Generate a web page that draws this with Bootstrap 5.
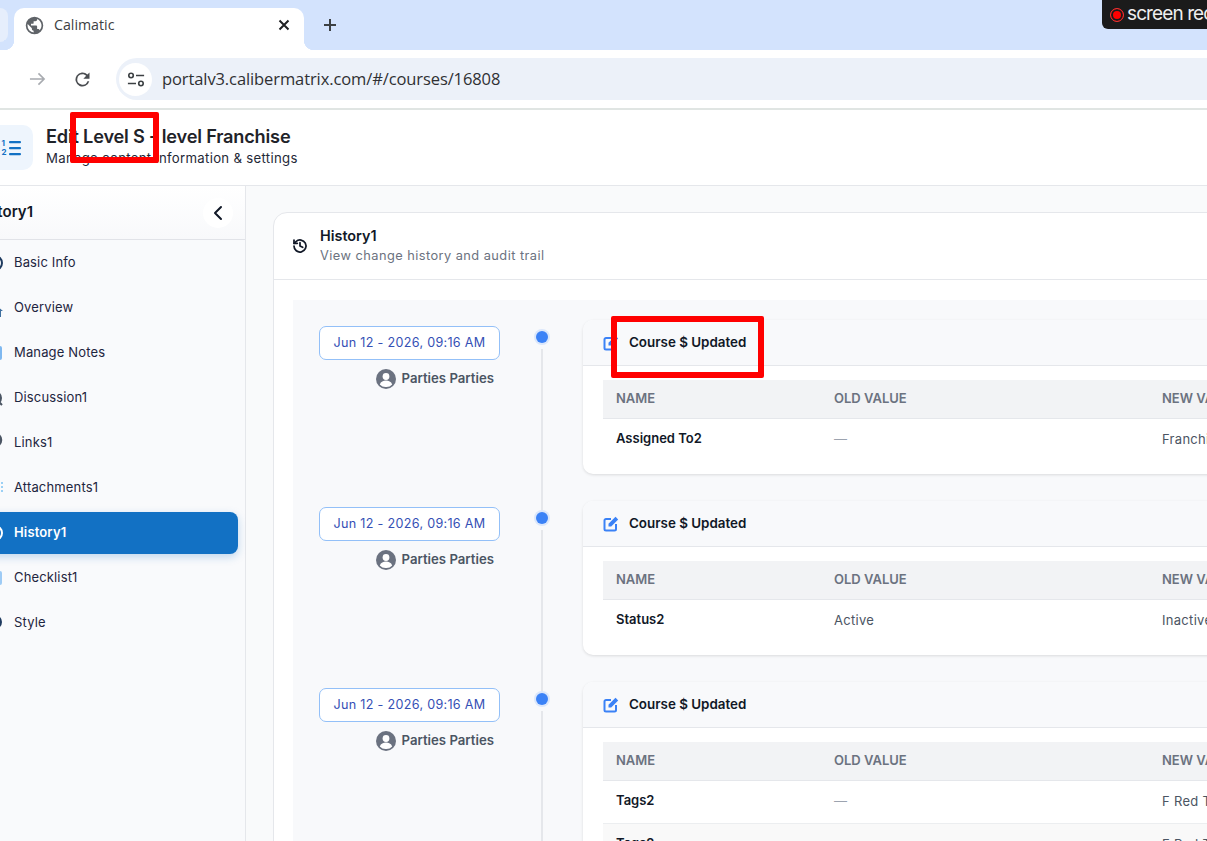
<!DOCTYPE html>
<html lang="en">
<head>
  <meta charset="UTF-8" />
  <meta name="viewport" content="width=device-width, initial-scale=1.0" />
  <title>Calimatic</title>
  <link href="https://cdn.jsdelivr.net/npm/bootstrap@5.3.0/dist/css/bootstrap.min.css" rel="stylesheet" crossorigin="anonymous" />
  <style>
    html, body { height: 841px; overflow: hidden; }
    body { font-family: "Inter", "Liberation Sans", sans-serif; color: #111827; background: #fff; position: relative; }

    /* browser chrome */
    .tab-strip { height: 50px; background: #d3e3fd; padding-top: 8px; font-family: "Open Sans", "Liberation Sans", sans-serif; }
    .tab-stub { width: 8px; height: 34px; background: #e6eefc; border-radius: 0 10px 10px 0; }
    .tab-live { position: relative; width: 290px; height: 42px; margin-left: 6px; background: #fff; border-radius: 10px 10px 0 0; padding: 0 14px 8px 10px; font-size: 14.2px; color: #3c4043; }
    .tab-live span { margin-left: 9px; }
    .tab-live::after { content: ""; position: absolute; right: -10px; bottom: 0; width: 10px; height: 10px; background: radial-gradient(circle at 100% 0, #d3e3fd 10px, #fff 10.5px); }
    .tab-live::before { content: ""; position: absolute; left: -10px; bottom: 0; width: 10px; height: 10px; background: radial-gradient(circle at 0 0, #d3e3fd 10px, #fff 10.5px); }
    .tab-add { margin-left: 19px; margin-top: -8px; height: 50px; }
    .rec-badge { position: absolute; top: 0; left: 1102px; width: 120px; height: 29px; background: #1b1b1b; border-radius: 0 0 0 6px; color: #eee; font-size: 19px; padding-left: 8px; letter-spacing: -.9px; white-space: nowrap; }
    .rec-dot { width: 14px; height: 14px; border-radius: 50%; background: #f00; box-shadow: inset 0 0 0 2px #1b1b1b; border: 1px solid #e33; margin-right: 3px; flex: none; }
    .tool-bar { height: 60px; padding: 8px 0; border-bottom: 2px solid #e0e5e3; }
    .tool-btn { width: 24px; height: 24px; }
    .url-pill { margin-left: 22px; flex: 1; height: 42px; background: #ecf1f9; border-radius: 21px 0 0 21px; padding: 1px 0 0 3px; font-family: "Open Sans", "Liberation Sans", sans-serif; font-size: 16.5px; color: #2f3033; letter-spacing: -.1px; }
    .url-icon { width: 33px; height: 33px; background: #fff; border-radius: 50%; margin-right: 10px; }

    /* page header */
    .page-head { height: 76px; border-bottom: 1px solid #e5e7eb; margin-left: -12px; padding-bottom: 2px; }
    .head-tile { width: 45px; height: 45px; background: #eef5fd; border-radius: 10px; margin-right: 13px; padding-right: 12px; position: relative; top: 1px; }
    .head-title { font-size: 18.2px; font-weight: 600; line-height: 20px; margin-bottom: 2px; letter-spacing: -.2px; color: #1f2329; }
    .head-sub { font-size: 13.2px; line-height: 20px; letter-spacing: .3px; color: #1f2937; }

    /* sidebar, starts left of the window like the capture */
    .body-row { height: 655px; margin-left: -55px; width: 1400px; }
    .side-col { width: 301px; flex: none; background: #f9fafc; border-right: 1px solid #e5e7eb; }
    .side-head { height: 54px; padding: 0 12px 0 29px; border-bottom: 1px solid #e1e3e8; background: linear-gradient(#fff, #f8f9fb); font-size: 15px; font-weight: 600; }
    .side-back { width: 30px; height: 30px; background: #fff; border-radius: 50%; }
    .side-list { padding-top: 2px; }
    .side-link { height: 42px; margin: 0 7px 3px 8px; padding-left: 33px; border-radius: 8px; font-size: 13px; color: #1e2540; letter-spacing: .15px; }
    .side-link svg { width: 18px; height: 18px; margin-right: 10px; flex: none; }
    .side-link.is-on { background: #1271c4; color: #fff; font-weight: 600; box-shadow: 0 3px 8px rgba(18, 113, 196, .25); }

    /* main */
    .main-col { flex: 1; background: #f9fafb; padding: 26px 0 0 27px; min-width: 0; }
    .hist-card { width: 1060px; height: 800px; background: #fff; border: 1px solid #e5e7eb; border-radius: 14px; }
    .hist-head { height: 67px; padding-left: 18px; border-bottom: 1px solid #e5e7eb; }
    .hist-title { font-size: 14.4px; font-weight: 600; line-height: 20px; }
    .hist-sub { font-size: 12.8px; line-height: 20px; color: #6b7280; letter-spacing: .45px; }
    .hist-body { padding: 20px 19px; }
    .time-panel { background: #f8f9fb; padding: 20px 0 0 26px; height: 700px; }
    .time-row { height: 181px; }
    .when-col { width: 181px; flex: none; }
    .when-pill { height: 34px; background: #fff; border: 1px solid #93c0f8; border-radius: 7px; color: #3550b5; font-size: 12.6px; letter-spacing: .3px; margin-top: 6px; }
    .when-user { margin-top: 9px; padding-right: 6px; font-size: 13.2px; font-weight: 600; color: #4b5563; }
    .when-user svg { margin-right: 6px; }
    .rail-col { width: 83px; flex: none; }
    .rail-dot { width: 12px; height: 12px; background: #3b82f6; border-radius: 50%; box-shadow: 0 0 0 2px #dbe7fb; margin-top: 11px; flex: none; }
    .rail-line { width: 2px; flex: 1; background: #e5e7eb; margin-top: 6px; margin-bottom: -11px; }
    .log-card { width: 760px; height: 154px; background: #fff; border-radius: 10px; box-shadow: 0 1px 3px rgba(0, 0, 0, .12); overflow: hidden; align-self: flex-start; }
    .log-card.is-tall { height: 200px; }
    .log-head { height: 46px; background: #f8f9fb; border-bottom: 1px solid #e5e7eb; padding-left: 20px; font-size: 13.4px; font-weight: 600; color: #111827; }
    .log-head svg { margin-right: 10px; }
    .log-body { padding: 14px 20px 0; }
    .log-table { table-layout: fixed; width: 740px; margin: 0; font-size: 13px; }
    .log-table th { background: #f2f3f5; color: #6b7280; font-weight: 600; font-size: 13px; height: 38.5px; padding: 0 13px 1px; vertical-align: middle; border-bottom: 1px solid #e5e7eb; text-transform: uppercase; }
    .log-table td { height: 43px; padding: 0 13px 1px; vertical-align: middle; border-bottom: 0; color: #4b5563; background: transparent; letter-spacing: .3px; }
    .log-table td.fld { color: #111827; font-weight: 600; padding-bottom: 3px; letter-spacing: 0; }
    .log-table td.nil { color: #9ca3af; }
    .log-table tr.has-line td { border-bottom: 1px solid #eceef0; }
    .log-table tr.row-alt td { background: #f9f9f9; }
    .col-a { width: 218px; }
    .col-b { width: 328px; }

    /* annotation boxes drawn on top of the screenshot */
    .mark-box { position: absolute; border: 6px solid #f00; border-radius: 2px; pointer-events: none; }
    .mark-one { left: 70px; top: 112px; width: 89px; height: 51px; }
    .mark-two { left: 611px; top: 316px; width: 153px; height: 62px; }
  </style>
</head>
<body>
  <div class="tab-strip d-flex align-items-start">
    <div class="tab-stub"></div>
    <div class="tab-live d-flex align-items-center">
      <svg width="21" height="21" viewBox="0 0 24 24" fill="#5f6368"><path d="M12 2a10 10 0 1 0 0 20 10 10 0 0 0 0-20zM4 12c0-.6.1-1.200.2-1.800L9 15v1c0 1.100.9 2 2 2v2a8 8 0 0 1-7-8zm13.900 5.400c-.3-.8-1-1.400-1.900-1.400h-1v-3c0-.6-.4-1-1-1H8v-2h2c.6 0 1-.4 1-1V7h2c1.100 0 2-.9 2-2v-.4a8 8 0 0 1 2.900 12.800z"/></svg>
      <span class="flex-grow-1">Calimatic</span>
      <svg width="12" height="12" viewBox="0 0 12 12" stroke="#202124" stroke-width="2" fill="none"><path d="M1.500 1.500l9 9M10.500 1.500l-9 9"/></svg>
    </div>
    <div class="tab-add d-flex align-items-center">
      <svg width="14" height="14" viewBox="0 0 14 14" stroke="#3c4043" stroke-width="2" fill="none"><path d="M7 1v12M1 7h12"/></svg>
    </div>
  </div>
  <div class="rec-badge d-flex align-items-center"><i class="rec-dot"></i>screen rec</div>

  <div class="tool-bar d-flex align-items-center">
    <div class="tool-btn d-flex align-items-center justify-content-center" style="margin-left:25px">
      <svg width="17" height="16" viewBox="0 0 18 16" stroke="#a8abb0" stroke-width="1.700" fill="none"><path d="M1 8h15M10 2l6 6-6 6"/></svg>
    </div>
    <div class="tool-btn d-flex align-items-center justify-content-center" style="margin-left:21px">
      <svg width="21" height="21" viewBox="0 0 24 24" fill="#4a4d51"><path d="M17.650 6.350A8 8 0 1 0 19.750 14h-2.100A6 6 0 1 1 12 6c1.660 0 3.140.69 4.220 1.780L13 11h7V4l-2.350 2.350z"/></svg>
    </div>
    <div class="url-pill d-flex align-items-center">
      <div class="url-icon d-flex align-items-center justify-content-center">
        <svg width="18" height="17" viewBox="0 0 20 18" stroke="#3c4043" stroke-width="1.800" fill="none"><circle cx="4.500" cy="4.500" r="2.500"/><path d="M10 4.500h9M1 13.500h9"/><circle cx="15.500" cy="13.500" r="2.500"/></svg>
      </div>
      portalv3.calibermatrix.com/#/courses/16808
    </div>
  </div>

  <div class="page-head d-flex align-items-center">
    <div class="head-tile d-flex align-items-center justify-content-end">
      <svg width="20" height="18" viewBox="0 0 20 18" fill="#1271c4"><rect x="8" y="2" width="12" height="2.200" rx="1"/><rect x="8" y="8" width="12" height="2.200" rx="1"/><rect x="8" y="14" width="12" height="2.200" rx="1"/><text x="0.500" y="7" font-size="8" font-weight="700" font-family="Inter, sans-serif">1</text><text x="0.500" y="16" font-size="8" font-weight="700" font-family="Inter, sans-serif">2</text></svg>
    </div>
    <div>
      <div class="head-title">Edit Level S - level Franchise</div>
      <div class="head-sub">Manage content information &amp; settings</div>
    </div>
  </div>

  <div class="body-row d-flex">
    <aside class="side-col">
      <div class="side-head d-flex align-items-center justify-content-between">
        <span>History1</span>
        <span class="side-back d-flex align-items-center justify-content-center">
          <svg width="10" height="16" viewBox="0 0 10 16" stroke="#111827" stroke-width="2" fill="none" stroke-linecap="round" stroke-linejoin="round"><path d="M8 2L2 8l6 6"/></svg>
        </span>
      </div>
      <div class="side-list">
        <div class="side-link d-flex align-items-center"><svg viewBox="0 0 18 18" fill="none" stroke="#1e3a5f" stroke-width="2"><circle cx="9" cy="9" r="7"/></svg>Basic Info</div>
        <div class="side-link d-flex align-items-center"><svg viewBox="0 0 18 18" fill="#3f6f9f"><path d="M9 5l8 7h-2v6H3v-6H1z"/></svg>Overview</div>
        <div class="side-link d-flex align-items-center"><svg viewBox="0 0 18 18" fill="#7fb8f0"><rect x="3" y="2" width="13" height="14" rx="2"/></svg>Manage Notes</div>
        <div class="side-link d-flex align-items-center"><svg viewBox="0 0 18 18" fill="none" stroke="#4b5563" stroke-width="2"><circle cx="9" cy="9" r="6"/><path d="M13 13l3 3"/></svg>Discussion1</div>
        <div class="side-link d-flex align-items-center"><svg viewBox="0 0 18 18" fill="none" stroke="#4b5563" stroke-width="2.500"><circle cx="9" cy="6" r="6"/></svg>Links1</div>
        <div class="side-link d-flex align-items-center"><svg viewBox="0 0 18 18" fill="none" stroke="#9bd0f5" stroke-width="2" stroke-dasharray="2 2"><path d="M16 3v12"/></svg>Attachments1</div>
        <div class="side-link is-on d-flex align-items-center"><svg viewBox="0 0 18 18" fill="none" stroke="#fff" stroke-width="2"><circle cx="9" cy="9" r="7"/></svg>History1</div>
        <div class="side-link d-flex align-items-center"><svg viewBox="0 0 18 18" fill="#9ecbf5"><rect x="3" y="2" width="13" height="14" rx="2"/></svg>Checklist1</div>
        <div class="side-link d-flex align-items-center"><svg viewBox="0 0 18 18" fill="#1e3a5f"><circle cx="9" cy="8" r="7"/></svg>Style</div>
      </div>
    </aside>

    <main class="main-col">
      <div class="hist-card">
        <div class="hist-head d-flex align-items-center">
          <svg width="16" height="16" viewBox="0 0 24 24" fill="none" stroke="#111827" stroke-width="2.600" stroke-linecap="round" stroke-linejoin="round" class="me-2 flex-shrink-0"><path d="M3 12a9 9 0 1 0 3-6.700L3 8"/><path d="M3 3v5h5"/><path d="M12 7v5l4 2"/></svg>
          <div class="ms-1">
            <div class="hist-title">History1</div>
            <div class="hist-sub">View change history and audit trail</div>
          </div>
        </div>
        <div class="hist-body">
          <div class="time-panel">

            <div class="time-row d-flex">
              <div class="when-col">
                <div class="when-pill d-flex align-items-center justify-content-center">Jun 12 - 2026, 09:16 AM</div>
                <div class="when-user d-flex align-items-center justify-content-end">
                  <svg width="20" height="20" viewBox="0 0 20 20"><circle cx="10" cy="10" r="10" fill="#6b7280"/><circle cx="10" cy="7.500" r="3.400" fill="#fff"/><path d="M3.800 15.500c1-3 3.500-4 6.200-4s5.200 1 6.200 4A8 8 0 0 1 10 18a8 8 0 0 1-6.200-2.500z" fill="#fff"/></svg>
                  Parties Parties
                </div>
              </div>
              <div class="rail-col d-flex flex-column align-items-center">
                <div class="rail-dot"></div>
                <div class="rail-line"></div>
              </div>
              <div class="log-card">
                <div class="log-head d-flex align-items-center">
                  <svg width="16" height="16" viewBox="0 0 16 16" fill="none" stroke="#3b82f6" stroke-width="2"><path d="M8 3H3A1.500 1.500 0 0 0 1.500 4.500v8.500A1.500 1.500 0 0 0 3 14.500h8.500a1.500 1.500 0 0 0 1.500-1.500V8"/><path d="M5.500 10.500V7.800L12.500.8l2.700 2.700-7 7z" fill="#3b82f6" stroke="none"/></svg>
                  Course $ Updated
                </div>
                <div class="log-body">
                  <table class="table log-table">
                    <thead><tr><th class="col-a">Name</th><th class="col-b">Old Value</th><th>New Value</th></tr></thead>
                    <tbody><tr><td class="fld">Assigned To2</td><td class="nil">—</td><td>Franchise</td></tr></tbody>
                  </table>
                </div>
              </div>
            </div>

            <div class="time-row d-flex">
              <div class="when-col">
                <div class="when-pill d-flex align-items-center justify-content-center">Jun 12 - 2026, 09:16 AM</div>
                <div class="when-user d-flex align-items-center justify-content-end">
                  <svg width="20" height="20" viewBox="0 0 20 20"><circle cx="10" cy="10" r="10" fill="#6b7280"/><circle cx="10" cy="7.500" r="3.400" fill="#fff"/><path d="M3.800 15.500c1-3 3.500-4 6.200-4s5.200 1 6.200 4A8 8 0 0 1 10 18a8 8 0 0 1-6.200-2.500z" fill="#fff"/></svg>
                  Parties Parties
                </div>
              </div>
              <div class="rail-col d-flex flex-column align-items-center">
                <div class="rail-dot"></div>
                <div class="rail-line"></div>
              </div>
              <div class="log-card">
                <div class="log-head d-flex align-items-center">
                  <svg width="16" height="16" viewBox="0 0 16 16" fill="none" stroke="#3b82f6" stroke-width="2"><path d="M8 3H3A1.500 1.500 0 0 0 1.500 4.500v8.500A1.500 1.500 0 0 0 3 14.500h8.500a1.500 1.500 0 0 0 1.500-1.500V8"/><path d="M5.500 10.500V7.800L12.500.8l2.700 2.700-7 7z" fill="#3b82f6" stroke="none"/></svg>
                  Course $ Updated
                </div>
                <div class="log-body">
                  <table class="table log-table">
                    <thead><tr><th class="col-a">Name</th><th class="col-b">Old Value</th><th>New Value</th></tr></thead>
                    <tbody><tr><td class="fld">Status2</td><td>Active</td><td>Inactive</td></tr></tbody>
                  </table>
                </div>
              </div>
            </div>

            <div class="time-row d-flex">
              <div class="when-col">
                <div class="when-pill d-flex align-items-center justify-content-center">Jun 12 - 2026, 09:16 AM</div>
                <div class="when-user d-flex align-items-center justify-content-end">
                  <svg width="20" height="20" viewBox="0 0 20 20"><circle cx="10" cy="10" r="10" fill="#6b7280"/><circle cx="10" cy="7.500" r="3.400" fill="#fff"/><path d="M3.800 15.500c1-3 3.500-4 6.200-4s5.200 1 6.200 4A8 8 0 0 1 10 18a8 8 0 0 1-6.200-2.500z" fill="#fff"/></svg>
                  Parties Parties
                </div>
              </div>
              <div class="rail-col d-flex flex-column align-items-center">
                <div class="rail-dot"></div>
                <div class="rail-line"></div>
              </div>
              <div class="log-card is-tall">
                <div class="log-head d-flex align-items-center">
                  <svg width="16" height="16" viewBox="0 0 16 16" fill="none" stroke="#3b82f6" stroke-width="2"><path d="M8 3H3A1.500 1.500 0 0 0 1.500 4.500v8.500A1.500 1.500 0 0 0 3 14.500h8.500a1.500 1.500 0 0 0 1.500-1.500V8"/><path d="M5.500 10.500V7.800L12.500.8l2.700 2.700-7 7z" fill="#3b82f6" stroke="none"/></svg>
                  Course $ Updated
                </div>
                <div class="log-body">
                  <table class="table log-table">
                    <thead><tr><th class="col-a">Name</th><th class="col-b">Old Value</th><th>New Value</th></tr></thead>
                    <tbody>
                      <tr class="has-line"><td class="fld">Tags2</td><td class="nil">—</td><td>F Red Tag</td></tr>
                      <tr class="row-alt"><td class="fld">Tags2</td><td class="nil">—</td><td>F Red Tag</td></tr>
                    </tbody>
                  </table>
                </div>
              </div>
            </div>

          </div>
        </div>
      </div>
    </main>
  </div>

  <div class="mark-box mark-one"></div>
  <div class="mark-box mark-two"></div>

  <script src="https://cdn.jsdelivr.net/npm/bootstrap@5.3.0/dist/js/bootstrap.bundle.min.js" crossorigin="anonymous"></script>
</body>
</html>
